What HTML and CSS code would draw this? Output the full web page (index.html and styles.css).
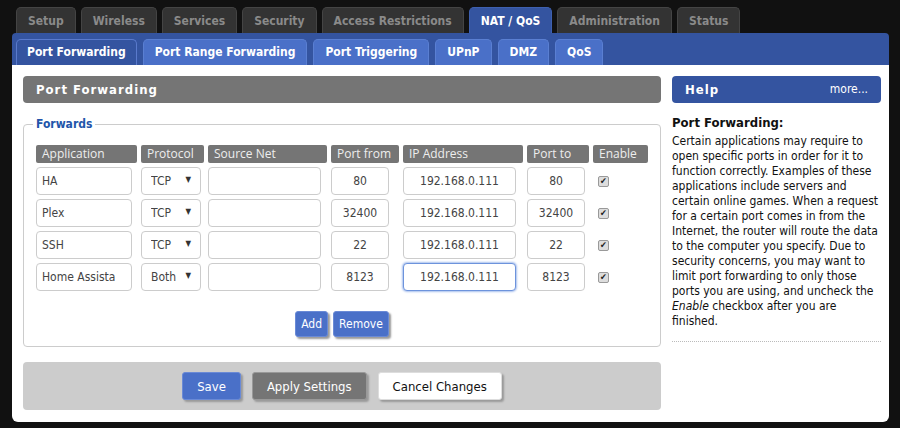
FILE: index.html
```html
<!DOCTYPE html>
<html lang="en">
<head>
  <meta charset="UTF-8">
  <title>Port Forwarding</title>
  <link rel="stylesheet" href="styles.css">
</head>
<body>

<div class="wrap">
  <!-- main menu -->
  <div class="tabs">
    <a class="tab">Setup</a>
    <a class="tab">Wireless</a>
    <a class="tab">Services</a>
    <a class="tab">Security</a>
    <a class="tab">Access Restrictions</a>
    <a class="tab on">NAT / QoS</a>
    <a class="tab">Administration</a>
    <a class="tab">Status</a>
  </div>

  <!-- sub menu -->
  <div class="subbar">
    <a class="sub on">Port Forwarding</a>
    <a class="sub">Port Range Forwarding</a>
    <a class="sub">Port Triggering</a>
    <a class="sub">UPnP</a>
    <a class="sub">DMZ</a>
    <a class="sub">QoS</a>
  </div>

  <div class="content">
    <div class="main">
      <h2 class="bar">Port Forwarding</h2>

      <fieldset class="box">
        <legend>Forwards</legend>
        <div class="grid">
          <div class="th">Application</div>
          <div class="th">Protocol</div>
          <div class="th">Source Net</div>
          <div class="th">Port from</div>
          <div class="th">IP Address</div>
          <div class="th">Port to</div>
          <div class="th">Enable</div>

          <input class="in app" value="HA">
          <div class="sel"><select><option>TCP</option></select></div>
          <input class="in src" value="">
          <input class="in port" value="80">
          <input class="in ip" value="192.168.0.111">
          <input class="in port" value="80">
          <span class="chk">✔</span>

          <input class="in app" value="Plex">
          <div class="sel"><select><option>TCP</option></select></div>
          <input class="in src" value="">
          <input class="in port" value="32400">
          <input class="in ip" value="192.168.0.111">
          <input class="in port" value="32400">
          <span class="chk">✔</span>

          <input class="in app" value="SSH">
          <div class="sel"><select><option>TCP</option></select></div>
          <input class="in src" value="">
          <input class="in port" value="22">
          <input class="in ip" value="192.168.0.111">
          <input class="in port" value="22">
          <span class="chk">✔</span>

          <input class="in app" value="Home Assistant">
          <div class="sel"><select><option>Both</option></select></div>
          <input class="in src" value="">
          <input class="in port" value="8123">
          <input class="in ip focus" value="192.168.0.111">
          <input class="in port" value="8123">
          <span class="chk">✔</span>
        </div>
        <div class="center">
          <button class="btn blue">Add</button>
          <button class="btn blue">Remove</button>
        </div>
      </fieldset>

      <div class="submit">
        <button class="btn big blue">Save</button>
        <button class="btn big gray">Apply Settings</button>
        <button class="btn big white">Cancel Changes</button>
      </div>
    </div>

    <div class="side">
      <h2 class="bar help">Help <span class="more">more...</span></h2>
      <h3>Port Forwarding:</h3>
      <p>Certain applications may require to open specific ports in order for it to function correctly. Examples of these applications include servers and certain online games. When a request for a certain port comes in from the Internet, the router will route the data to the computer you specify. Due to security concerns, you may want to limit port forwarding to only those ports you are using, and uncheck the <i>Enable</i> checkbox after you are finished.</p>
      <hr class="dots">
    </div>
  </div>
</div>

</body>
</html>
```

FILE: styles.css
```css
*{box-sizing:border-box}
body{margin:0;background:#111;font-family:"DejaVu Sans Condensed","DejaVu Sans",sans-serif;font-size:12px;color:#111}
.wrap{margin-left:12px;width:877px;padding-top:7px}

.tabs{display:flex;gap:5px;padding-left:4px}
.tab{height:26px;line-height:26px;padding:0 11px;background:#333;border:1px solid #444;border-bottom:0;border-radius:5px 5px 0 0;color:#8a8a8a;font-weight:bold;font-size:12px}
.tab.on{background:#3454a0;border-color:#3e60b0;color:#fff}

.subbar{display:flex;gap:6px;height:32px;padding:6px 4px 0;background:#3454a0;border-radius:4px 4px 0 0}
.sub{height:26px;line-height:25px;padding:0 11px;background:#4a70c8;border:1px solid #5a7fd2;border-bottom:0;border-radius:5px 5px 0 0;color:#fff;font-weight:bold;font-size:12px}
.sub.on{background:#3454a0;border-color:#5a7acc;padding:0 10px}

.content{display:flex;gap:11px;height:357px;padding:11px 8px 0 11px;background:#fff;border-radius:0 0 6px 6px}
.main{width:638px}
.side{width:209px}

.bar{margin:0;height:27px;line-height:27px;padding:0 13px;background:#757575;border-radius:4px;color:#fff;font-size:13px;font-weight:bold;letter-spacing:1px}
.bar.help{display:flex;justify-content:space-between;background:#3454a0}
.more{font-weight:normal;letter-spacing:0;font-size:12px}

.box{margin:14px 0 0;padding:14px 12px 9px;border:1px solid #ccc;border-radius:4px}
.box legend{padding:0 3px;margin-left:-3px;color:#2255aa;font-weight:bold;font-size:12px}

.grid{display:grid;grid-template-columns:101px 63px 119px 68px 120px 62px 55px;gap:4px;align-items:center}
.th{height:18px;line-height:18px;padding:0 6px;background:#757575;border-radius:2px;color:#eee;font-family:"Open Sans",sans-serif;font-size:12px}

.in{height:28px;padding:0 5px;border:1px solid #ccc;border-radius:4px;font:inherit;font-size:12px;color:#444;outline:none}
.app{width:96px;padding-right:16px}
.src{width:113px}
.port{width:58px;text-align:center}
.ip{width:113px;text-align:center}
.in.focus{border-color:#6d93dc;box-shadow:0 0 2px 1px #a9c1ee}

.sel{position:relative;width:60px}
.sel select{width:60px;height:28px;padding:0 0 0 9px;border:1px solid #ccc;border-radius:4px;background:#fff;font:inherit;font-size:12px;color:#444;appearance:none;-webkit-appearance:none}
.sel::after{content:"▼";position:absolute;right:10px;top:8px;font-size:8px;color:#333}

.chk{display:block;width:11px;height:11px;margin-left:5px;background:#ddd;border:1px solid #999;border-radius:2px;font-size:9px;line-height:9px;text-align:center;color:#222}

.center{display:flex;justify-content:center;gap:5px;margin-top:20px}
.btn{height:26px;padding:0 5px;border:1px solid #6a8ad6;border-radius:3px;font:inherit;font-size:12px;color:#fff;box-shadow:2px 2px 2px #999}
.blue{background:#4a70c8}
.gray{background:#757575;border-color:#999}
.white{background:#fff;border-color:#ddd;color:#111}
.big{height:28px;padding:0 14px;font-size:13px}

.submit{display:flex;justify-content:center;gap:11px;margin-top:15px;padding:10px;background:#ccc;border-radius:4px}

.side h3{margin:12px 0 4px;font-size:13px}
.side p{margin:0;line-height:15px}
.dots{margin:12px 0 0;border:0;border-top:1px dotted #bbb}
```
